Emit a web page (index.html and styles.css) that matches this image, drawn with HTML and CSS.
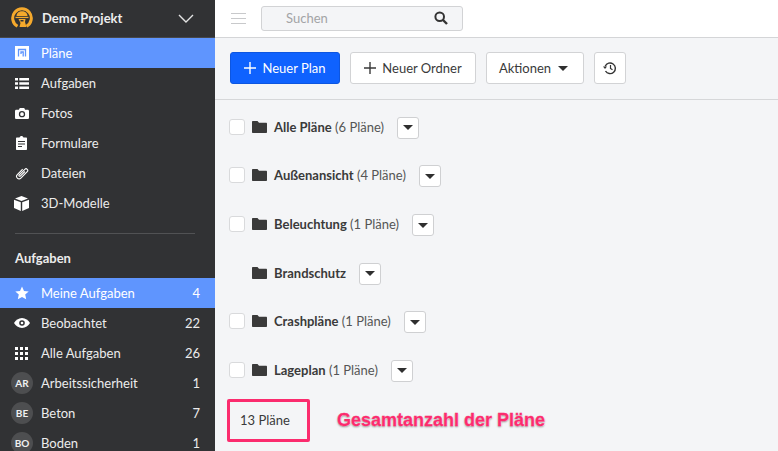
FILE: index.html
```html
<!DOCTYPE html>
<html>
  <head>
    <title>Pläne</title>
    <meta charset="utf-8" />
    <link rel="stylesheet" href="styles.css">
  </head>
  <body>
    <div class="app">
      <aside class="sidebar">
        <div class="project">
          <svg class="logo" viewBox="0 0 22 22" width="22" height="22">
            <path d="M6.500 19.300A9.300 9.300 0 1 1 15.500 19.300" fill="none" stroke="#f5a92c" stroke-width="3"/>
            <path d="M5.500 9c0-3 2.400-4.700 5.500-4.700S16.500 6 16.500 9z" fill="#f5a92c"/>
            <rect x="4.500" y="9.800" width="13" height="1.300" fill="#f5a92c"/>
            <path d="M7.500 12h7l-.5 3 1.500 5h-7l1-4z" fill="#f5a92c"/>
            <path d="M9.500 13h3v1.500h-3z" fill="#313234"/>
          </svg>
          <span class="project-name">Demo Projekt</span>
          <svg class="project-chevron" viewBox="0 0 16 9" width="16" height="9">
            <path d="M1 1l7 7 7-7" fill="none" stroke="#e4e4e4" stroke-width="1.400"/>
          </svg>
        </div>

        <a class="nav-item active">
          <span class="nav-icon">
            <svg viewBox="0 0 14 14" width="14" height="14">
              <rect x="0" y="0" width="14" height="14" fill="#fff"/>
              <path d="M3.500 10.500V3.500h7v7M6 8V6h2.200v4.500" fill="none" stroke="#5f95fe" stroke-width="1.300"/>
            </svg>
          </span>
          <span class="nav-label">Pläne</span>
        </a>
        <a class="nav-item">
          <span class="nav-icon">
            <svg viewBox="0 0 14 11" width="14" height="11" fill="#fff">
              <path d="M0 0h3v2.600H0zM4.300 0H14v2.600H4.300zM0 4.200h3v2.600H0zM4.300 4.200H14v2.600H4.300zM0 8.400h3V11H0zM4.300 8.400H14V11H4.300z"/>
            </svg>
          </span>
          <span class="nav-label">Aufgaben</span>
        </a>
        <a class="nav-item">
          <span class="nav-icon">
            <svg viewBox="0 0 14 11" width="14" height="11">
              <path fill="#fff" d="M1.300 1.800h2.600L4.800 0h4.400l.9 1.800h2.600c.7 0 1.300.6 1.300 1.300v6.600c0 .7-.6 1.300-1.300 1.300H1.300C.6 11 0 10.400 0 9.700V3.100c0-.7.600-1.300 1.300-1.300z"/>
              <circle cx="7" cy="6.200" r="2.500" fill="none" stroke="#313234" stroke-width="1.300"/>
            </svg>
          </span>
          <span class="nav-label">Fotos</span>
        </a>
        <a class="nav-item">
          <span class="nav-icon">
            <svg viewBox="0 0 11 14" width="11" height="14">
              <path fill="#fff" d="M1 1.500h2.500C3.800.600 4.600 0 5.500 0s1.700.6 2 1.500H10c.6 0 1 .4 1 1V13c0 .6-.4 1-1 1H1c-.6 0-1-.4-1-1V2.500c0-.6.400-1 1-1z"/>
              <path stroke="#313234" d="M2 5.500h7M2 8h7M2 10.500h4"/>
            </svg>
          </span>
          <span class="nav-label">Formulare</span>
        </a>
        <a class="nav-item">
          <span class="nav-icon">
            <svg viewBox="0 0 14 14" width="14" height="14">
              <g transform="rotate(45 7 7.400)">
                <path fill="none" stroke="#fff" stroke-width="1.100" d="M4.500 4v7.500a2.500 2.500 0 0 0 5 0V2.500a1.700 1.700 0 0 0-3.400 0v8a.8.8 0 0 0 1.600 0V4"/>
              </g>
            </svg>
          </span>
          <span class="nav-label">Dateien</span>
        </a>
        <a class="nav-item">
          <span class="nav-icon">
            <svg viewBox="0 0 15 15" width="15" height="15" fill="#fff">
              <path d="M7.500 0l6.500 2.400-6.500 2.500L1 2.400zM0 3.700l6.800 2.600V15L0 12zM15 3.700L8.200 6.300V15l6.800-3z"/>
            </svg>
          </span>
          <span class="nav-label">3D-Modelle</span>
        </a>

        <div class="sidebar-divider"></div>
        <div class="sidebar-heading">Aufgaben</div>

        <a class="nav-item active">
          <span class="nav-icon">
            <svg viewBox="0 0 14 14" width="14" height="14" fill="#fff">
              <path d="M7 .500l2 4.400 4.700.5-3.500 3.200 1 4.700L7 10.900l-4.200 2.400 1-4.700L.3 5.400 5 4.900z"/>
            </svg>
          </span>
          <span class="nav-label">Meine Aufgaben</span>
          <span class="nav-count">4</span>
        </a>
        <a class="nav-item">
          <span class="nav-icon">
            <svg viewBox="0 0 16 10" width="16" height="10">
              <path fill="#fff" d="M8 0c3.500 0 6.300 2.200 8 5-1.700 2.800-4.500 5-8 5S1.700 7.800 0 5c1.700-2.800 4.500-5 8-5z"/>
              <circle cx="8" cy="5" r="2.800" fill="#313234"/>
              <circle cx="8" cy="5" r="1.300" fill="#fff"/>
            </svg>
          </span>
          <span class="nav-label">Beobachtet</span>
          <span class="nav-count">22</span>
        </a>
        <a class="nav-item">
          <span class="nav-icon">
            <svg viewBox="0 0 13 13" width="13" height="13" fill="#fff">
              <path d="M0 0h3v3H0zM5 0h3v3H5zM10 0h3v3h-3zM0 5h3v3H0zM5 5h3v3H5zM10 5h3v3h-3zM0 10h3v3H0zM5 10h3v3H5zM10 10h3v3h-3z"/>
            </svg>
          </span>
          <span class="nav-label">Alle Aufgaben</span>
          <span class="nav-count">26</span>
        </a>
        <a class="nav-item">
          <span class="nav-icon"><span class="avatar">AR</span></span>
          <span class="nav-label">Arbeitssicherheit</span>
          <span class="nav-count">1</span>
        </a>
        <a class="nav-item">
          <span class="nav-icon"><span class="avatar">BE</span></span>
          <span class="nav-label">Beton</span>
          <span class="nav-count">7</span>
        </a>
        <a class="nav-item">
          <span class="nav-icon"><span class="avatar">BO</span></span>
          <span class="nav-label">Boden</span>
          <span class="nav-count">1</span>
        </a>
      </aside>

      <main class="main">
        <div class="topbar">
          <div class="hamburger"><span></span><span></span><span></span></div>
          <div class="search">
            <span class="search-text">Suchen</span>
            <svg viewBox="0 0 14 14" width="14" height="14">
              <circle cx="5.700" cy="5.700" r="4.300" fill="none" stroke="#333" stroke-width="2"/>
              <path d="M9 9l4 4" stroke="#333" stroke-width="2.400"/>
            </svg>
          </div>
        </div>

        <div class="toolbar">
          <button class="btn btn-primary">
            <svg class="plus" viewBox="0 0 12 12" width="12" height="12"><path d="M6 0v12M0 6h12" stroke="#fff" stroke-width="1.400"/></svg>
            Neuer Plan
          </button>
          <button class="btn btn-ordner">
            <svg class="plus" viewBox="0 0 12 12" width="12" height="12"><path d="M6 0v12M0 6h12" stroke="#3a3a3a" stroke-width="1.400"/></svg>
            Neuer Ordner
          </button>
          <button class="btn btn-aktionen">
            Aktionen
            <span class="caret"></span>
          </button>
          <button class="btn btn-history">
            <svg viewBox="0 0 14 14" width="14" height="14" fill="none" stroke="#333" stroke-width="1.400">
              <path d="M2.200 5.200A5.300 5.300 0 1 1 2.500 10"/>
              <path d="M0 5.500h4L2 8z" fill="#333" stroke="none"/>
              <path d="M7.500 4v3.500l2 1.300" stroke-width="1.200"/>
            </svg>
          </button>
        </div>

        <div class="folders">
          <div class="folder">
            <span class="check"></span>
            <svg class="folder-icon" viewBox="0 0 15 12" width="15" height="12"><path d="M1 0h4.500L7 1.700h7c.6 0 1 .4 1 1V11c0 .6-.4 1-1 1H1c-.6 0-1-.4-1-1V1c0-.6.400-1 1-1z"/></svg>
            <span class="folder-name"><b>Alle Pläne</b> (6 Pläne)</span>
            <span class="folder-menu"><span class="caret"></span></span>
          </div>
          <div class="folder">
            <span class="check"></span>
            <svg class="folder-icon" viewBox="0 0 15 12" width="15" height="12"><path d="M1 0h4.500L7 1.700h7c.6 0 1 .4 1 1V11c0 .6-.4 1-1 1H1c-.6 0-1-.4-1-1V1c0-.6.400-1 1-1z"/></svg>
            <span class="folder-name"><b>Außenansicht</b> (4 Pläne)</span>
            <span class="folder-menu"><span class="caret"></span></span>
          </div>
          <div class="folder">
            <span class="check"></span>
            <svg class="folder-icon" viewBox="0 0 15 12" width="15" height="12"><path d="M1 0h4.500L7 1.700h7c.6 0 1 .4 1 1V11c0 .6-.4 1-1 1H1c-.6 0-1-.4-1-1V1c0-.6.400-1 1-1z"/></svg>
            <span class="folder-name"><b>Beleuchtung</b> (1 Pläne)</span>
            <span class="folder-menu"><span class="caret"></span></span>
          </div>
          <div class="folder">
            <span class="check check-hidden"></span>
            <svg class="folder-icon" viewBox="0 0 15 12" width="15" height="12"><path d="M1 0h4.500L7 1.700h7c.6 0 1 .4 1 1V11c0 .6-.4 1-1 1H1c-.6 0-1-.4-1-1V1c0-.6.400-1 1-1z"/></svg>
            <span class="folder-name"><b>Brandschutz</b></span>
            <span class="folder-menu"><span class="caret"></span></span>
          </div>
          <div class="folder">
            <span class="check"></span>
            <svg class="folder-icon" viewBox="0 0 15 12" width="15" height="12"><path d="M1 0h4.500L7 1.700h7c.6 0 1 .4 1 1V11c0 .6-.4 1-1 1H1c-.6 0-1-.4-1-1V1c0-.6.400-1 1-1z"/></svg>
            <span class="folder-name"><b>Crashpläne</b> (1 Pläne)</span>
            <span class="folder-menu"><span class="caret"></span></span>
          </div>
          <div class="folder">
            <span class="check"></span>
            <svg class="folder-icon" viewBox="0 0 15 12" width="15" height="12"><path d="M1 0h4.500L7 1.700h7c.6 0 1 .4 1 1V11c0 .6-.4 1-1 1H1c-.6 0-1-.4-1-1V1c0-.6.400-1 1-1z"/></svg>
            <span class="folder-name"><b>Lageplan</b> (1 Pläne)</span>
            <span class="folder-menu"><span class="caret"></span></span>
          </div>
        </div>

        <div class="total">
          <div class="total-box">13 Pläne</div>
          <div class="total-note">Gesamtanzahl der Pläne</div>
        </div>
      </main>
    </div>
  </body>
</html>
```

FILE: styles.css
```css
* {
  box-sizing: border-box;
}
html,
body {
  margin: 0;
  height: 100%;
  overflow: hidden;
  font-family: "Lato", "Open Sans", sans-serif;
  font-size: 13px;
  color: #3a3a3a;
}

.app {
  display: flex;
  height: 451px;
}

/* sidebar */
.sidebar {
  flex: 0 0 215px;
  height: 451px;
  overflow: hidden;
  background: #313234;
  color: #ececec;
}
.project {
  display: flex;
  align-items: center;
  height: 38px;
  padding: 0 21px 1px 11px;
  border-bottom: 1px solid #47484a;
}
.logo {
  flex: none;
}
.project-name {
  flex: 1;
  margin-left: 9px;
  font-weight: 700;
  color: #ededed;
}
.nav-item {
  display: flex;
  align-items: center;
  height: 30px;
  padding-right: 15px;
}
.nav-item.active {
  background: #5f95fe;
  color: #fff;
}
.nav-icon {
  display: flex;
  flex: 0 0 41px;
  justify-content: center;
  padding-left: 2px;
}
.nav-label {
  flex: 1;
}
.avatar {
  display: flex;
  align-items: center;
  justify-content: center;
  width: 22px;
  height: 22px;
  margin-left: 1px;
  border-radius: 50%;
  background: #4d4e50;
  font-size: 10px;
  font-weight: 700;
  color: #f0f0f0;
}
.sidebar-divider {
  height: 1px;
  margin: 15px 20px 0 15px;
  background: #515254;
}
.sidebar-heading {
  height: 44px;
  padding: 16px 15px 0;
  font-weight: 700;
  line-height: 17px;
}

/* top bar */
.main {
  flex: 1;
  min-width: 0;
  background: #f4f5f7;
}
.topbar {
  display: flex;
  align-items: center;
  height: 38px;
  padding: 0 0 1px 16px;
  background: #fff;
  border-bottom: 1px solid #d4d5d7;
}
.hamburger {
  display: flex;
  flex-direction: column;
  gap: 4px;
  width: 15px;
}
.hamburger span {
  height: 1px;
  background: #c8c9cb;
}
.search {
  display: flex;
  align-items: center;
  justify-content: space-between;
  width: 202px;
  height: 25px;
  margin-left: 15px;
  padding: 0 14px 0 24px;
  background: #f4f5f7;
  border: 1px solid #d2d3d5;
  border-radius: 3px;
}
.search-text {
  font-size: 13px;
  color: #a3a4a6;
}

/* toolbar */
.toolbar {
  display: flex;
  gap: 10px;
  height: 62px;
  padding: 14px 15px 0;
  border-bottom: 1px solid #d6d7d9;
}
.btn {
  display: flex;
  align-items: center;
  justify-content: center;
  height: 32px;
  padding: 0;
  background: #fff;
  border: 1px solid #d2d3d5;
  border-radius: 3px;
  font-family: inherit;
  font-size: 13px;
  color: #3a3a3a;
}
.btn-primary {
  width: 110px;
  background: #0f62fe;
  border-color: #0d56e0;
  color: #fff;
}
.btn-ordner {
  width: 126px;
}
.btn-aktionen {
  width: 98px;
  padding-right: 3px;
}
.btn-history {
  width: 32px;
}
.plus {
  margin-right: 6px;
}
.btn .caret {
  margin-left: 7px;
}
.caret {
  display: block;
  width: 0;
  height: 0;
  border-top: 5px solid #2f2f2f;
  border-left: 5px solid transparent;
  border-right: 5px solid transparent;
}

/* folders */
.folders {
  padding: 2.600px 0 0 14px;
}
.folder {
  display: flex;
  align-items: center;
  height: 48.6px;
}
.check {
  flex: none;
  width: 16px;
  height: 16px;
  background: #fff;
  border: 1px solid #d9dadc;
  border-radius: 3px;
}
.check-hidden {
  visibility: hidden;
}
.folder-icon {
  flex: none;
  margin-left: 7px;
  fill: #3a3a3a;
}
.folder-name {
  margin-left: 7px;
  font-size: 13px;
  color: #555;
}
.folder-name b {
  color: #3a3a3a;
}
.folder-menu {
  display: flex;
  align-items: center;
  justify-content: center;
  width: 22px;
  height: 22px;
  margin: 2px 0 0 13px;
  background: #fff;
  border: 1px solid #cfd0d2;
  border-radius: 3px;
}

/* total */
.total {
  display: flex;
  align-items: center;
  margin: 4.400px 0 0 12px;
}
.total-box {
  display: flex;
  align-items: center;
  width: 83px;
  height: 43px;
  padding-left: 10px;
  border: 3px solid #fb2c6e;
  border-radius: 2px;
  font-size: 13px;
}
.total-note {
  margin: 0 0 0 27px;
  font-family: "Liberation Sans", sans-serif;
  font-size: 18px;
  font-weight: 700;
  color: #fb2c6e;
  -webkit-text-stroke: 0.3px #fb2c6e;
  text-shadow: 0 0 1px #fff, 0 0 1px #fff, 0 1px 2px rgba(0, 0, 0, 0.45);
}
```
